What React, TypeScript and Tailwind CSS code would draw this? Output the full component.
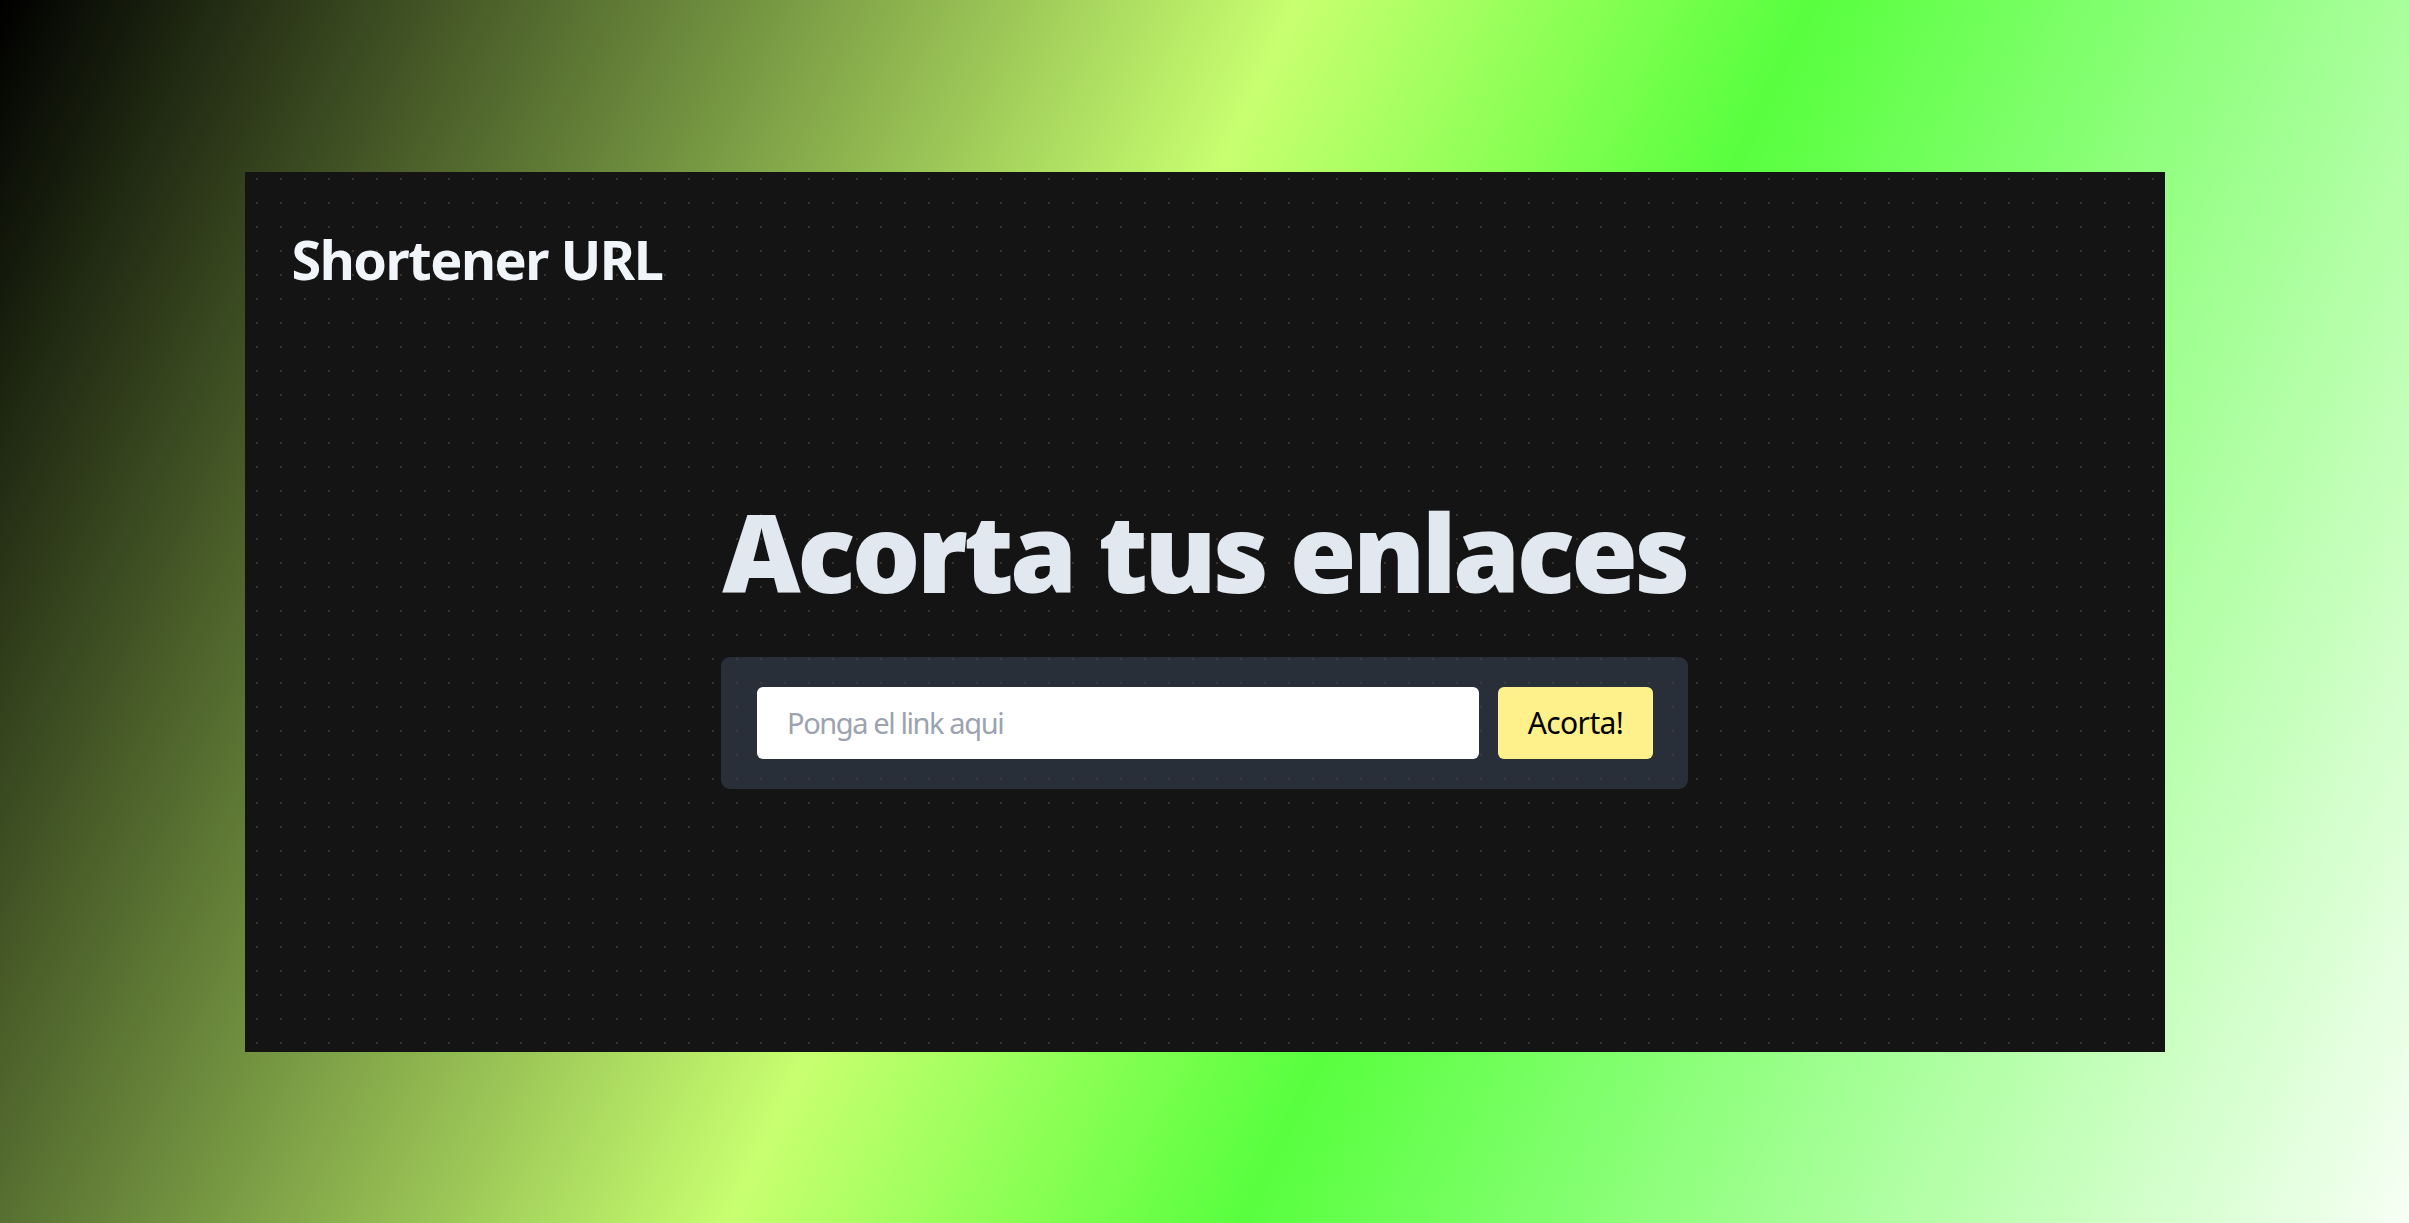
import React from 'react';

function App() {
  return (
    <div
      className="min-h-screen flex items-center justify-center bg-[linear-gradient(115deg,#000000_0%,#c8ff70_43.6%,#58ff3e_60.8%,#f7fff5_100%)]"
      style={{ fontFamily: '"Noto Sans", "Open Sans", sans-serif' }}
    >
      <div className="w-[1920px] h-[880px] flex flex-col bg-[#141414] bg-[radial-gradient(circle,#3d3226_1px,transparent_1.5px)] [background-size:24px_24px] [background-position:0px_-5px]">
        <header className="px-[47px] pt-[57px]">
          <h1 className="text-[54px] leading-[60px] font-bold tracking-[-1.5px] text-[#f1f5f9]">Shortener URL</h1>
        </header>

        <main className="flex flex-col items-center mt-[209px]">
          <h2 className="text-[108px] leading-none font-black tracking-[-3.6px] text-[#e2e8f0]">Acorta tus enlaces</h2>

          <form
            className="mt-[51px] w-[967px] flex items-center gap-[19px] pl-[36px] pr-[35px] py-[30px] rounded-[9px] bg-[#374151]/60"
            onSubmit={(e) => e.preventDefault()}
          >
            <input
              type="text"
              placeholder="Ponga el link aqui"
              className="flex-1 h-[72px] rounded-[6px] bg-white px-[30px] text-[29px] tracking-[-1.4px] text-gray-900 placeholder:text-[#9ca3af] outline-none"
            />
            <button
              type="submit"
              className="w-[155px] h-[72px] rounded-[6px] bg-[#fef08a] text-[30px] tracking-[-0.6px] text-black"
            >
              Acorta!
            </button>
          </form>
        </main>
      </div>
    </div>
  );
}

export default App;
